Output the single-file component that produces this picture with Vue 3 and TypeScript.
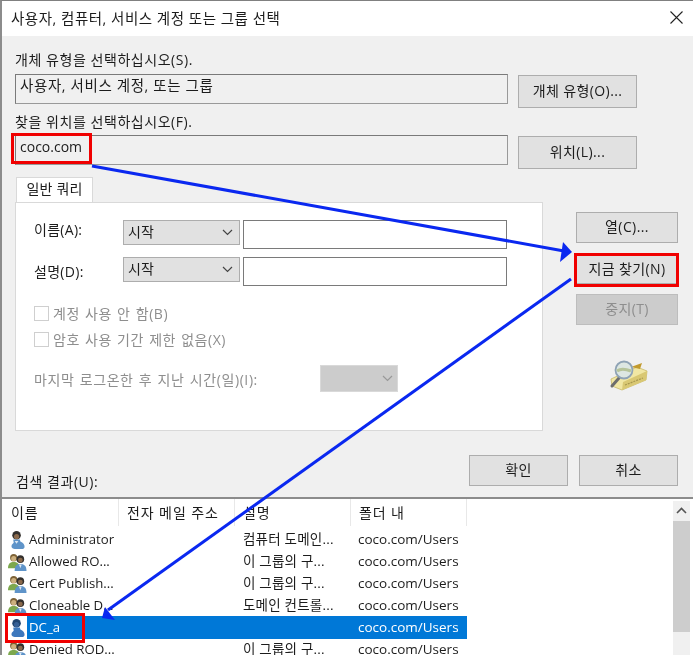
<script setup lang="ts">
interface Row { name: string; desc: string; group: boolean; selected?: boolean }
const rows: Row[] = [
  { name: 'Administrator', desc: '컴퓨터 도메인...', group: false },
  { name: 'Allowed RO...', desc: '이 그룹의 구...', group: true },
  { name: 'Cert Publish...', desc: '이 그룹의 구...', group: true },
  { name: 'Cloneable D...', desc: '도메인 컨트롤...', group: true },
  { name: 'DC_a', desc: '', group: false, selected: true },
  { name: 'Denied ROD...', desc: '이 그룹의 구...', group: true },
]
const columns = ['이름', '전자 메일 주소', '설명', '폴더 내']
const queries = [
  { label: '이름(A):' },
  { label: '설명(D):' },
]
const checks = ['계정 사용 안 함(B)', '암호 사용 기간 제한 없음(X)']
</script>

<template>
  <div class="window">
    <header class="title">
      <span>사용자, 컴퓨터, 서비스 계정 또는 그룹 선택</span>
      <svg class="close" width="13" height="13" viewBox="0 0 13 13"><path d="M.5.5l12 12M12.5.5l-12 12" stroke="#222" stroke-width="1.1" fill="none" /></svg>
    </header>

    <main class="body">
      <div class="label first">개체 유형을 선택하십시오(S).</div>
      <div class="field-row">
        <div class="field ko">사용자, 서비스 계정, 또는 그룹</div>
        <button class="btn wide">개체 유형(O)...</button>
      </div>
      <div class="label second">찾을 위치를 선택하십시오(F).</div>
      <div class="field-row">
        <div class="field">coco.com</div>
        <button class="btn wide">위치(L)...</button>
      </div>

      <div class="query">
        <div class="left">
          <div class="tab">일반 쿼리</div>
          <div class="panel">
            <div v-for="q in queries" :key="q.label" class="q-row">
              <span class="q-label">{{ q.label }}</span>
              <div class="select">
                <span>시작</span>
                <svg width="11" height="7" viewBox="0 0 11 7"><path d="M1 1l4.500 4.500L10 1" stroke="#444" stroke-width="1.200" fill="none" /></svg>
              </div>
              <div class="input"></div>
            </div>
            <label v-for="(c, i) in checks" :key="c" class="check" :class="{ top: i === 0 }">
              <span class="box"></span>{{ c }}
            </label>
            <div class="last">
              <span class="last-label">마지막 로그온한 후 지난 시간(일)(I):</span>
              <div class="select-off">
                <svg width="11" height="7" viewBox="0 0 11 7"><path d="M1 1l4.500 4.500L10 1" stroke="#999" stroke-width="1.200" fill="none" /></svg>
              </div>
            </div>
          </div>
        </div>
        <div class="side">
          <button class="btn side-btn">열(C)...</button>
          <button class="btn side-btn now">지금 찾기(N)</button>
          <button class="btn side-btn off">중지(T)</button>
          <svg class="finder" width="40" height="32" viewBox="0 0 40 32">
            <path d="M2 20L28 8l10 4-1 9-24 10-10-4z" fill="#f1e7a4" stroke="#c9b968" stroke-width=".8" />
            <path d="M13 31l24-10 1-9-24 11z" fill="#d9c873" />
            <path d="M16 26l18-7" stroke="#a8974f" stroke-width="1.200" stroke-dasharray="2 1" />
            <path d="M22 8l11-4-2 6z" fill="#c29a2e" />
            <path d="M10 19l-7 8" stroke="#6d6d6d" stroke-width="3" stroke-linecap="round" />
            <circle cx="15" cy="11" r="8.500" fill="#dde7e2" stroke="#8fa3b5" stroke-width="1.800" />
            <path d="M8 12c4-3 9-2 14 0" stroke="#b6c49a" stroke-width="3" fill="none" />
          </svg>
        </div>
      </div>

      <div class="actions">
        <span class="label results-label">검색 결과(U):</span>
        <button class="btn act">확인</button>
        <button class="btn act">취소</button>
      </div>
    </main>

    <section class="results">
      <div class="table">
        <div class="head">
          <span v-for="c in columns" :key="c" class="head-cell">{{ c }}</span>
        </div>
        <div v-for="r in rows" :key="r.name" class="row" :class="{ sel: r.selected }">
          <span class="ico">
            <svg width="20" height="20" viewBox="0 0 20 20">
              <template v-if="r.group">
                <circle cx="6" cy="5.500" r="3.800" class="hair-b" />
                <circle cx="6" cy="6.500" r="2.700" class="skin" />
                <path d="M0 16.500c0-5 2.500-6.500 6-6.500s6 1.500 6 6.500z" class="body-g" />
                <circle cx="13" cy="7" r="4" class="hair-d" />
                <circle cx="13" cy="8" r="2.500" class="skin-d" />
                <path d="M7 19.500c0-6 2.500-7.500 6-7.500s6.500 1.500 6.500 7.500z" class="body-b" />
                <path d="M11.500 12.500l1.500 4 1.500-4z" class="shirt" />
              </template>
              <template v-else>
                <circle cx="9" cy="5" r="4.500" class="hair-d" />
                <circle cx="9" cy="6.500" r="2.700" class="skin-d" />
                <path d="M5.500 9.500h7l.5 2c3 1 4.500 3 4.500 6l-1.500 2H7c-3-.5-4-2-3-4.500l2-2z" class="body-b" />
                <path d="M7 11l2 3 2-3z" class="shirt" />
              </template>
            </svg>
          </span>
          <span class="c-name">{{ r.name }}</span>
          <span class="c-mail"></span>
          <span class="c-desc">{{ r.desc }}</span>
          <span class="c-folder">coco.com/Users</span>
        </div>
      </div>
      <div class="scroll">
        <svg class="up" width="11" height="7" viewBox="0 0 11 7"><path d="M1 6l4.500-4.500L10 6" stroke="#555" stroke-width="1.600" fill="none" /></svg>
        <div class="thumb"></div>
      </div>
    </section>

    <svg class="overlay" width="693" height="655" viewBox="0 0 693 655">
      <rect x="12.500" y="134.500" width="78" height="28" fill="none" stroke="#f00000" stroke-width="3" />
      <rect x="575.500" y="254.500" width="102" height="31" fill="none" stroke="#f00000" stroke-width="3" />
      <rect x="6.500" y="614.500" width="77" height="27" fill="none" stroke="#f00000" stroke-width="3" />
      <path d="M92 166L564 251" stroke="#0a28f0" stroke-width="3" />
      <path d="M572 252L563 242 560 262z" fill="#0a28f0" />
      <path d="M571 279L108 610" stroke="#0a28f0" stroke-width="3" />
      <path d="M102 618L115 620 105 607z" fill="#0a28f0" />
    </svg>
  </div>
</template>

<style scoped>
.window {
  position: relative;
  width: 693px;
  height: 655px;
  overflow: hidden;
  box-sizing: border-box;
  border-top: 1px solid #808080;
  border-left: 2px solid #8c8c8c;
  background: #fff;
  color: #1c1c1c;
  font-family: "Open Sans", "Noto Sans CJK KR", sans-serif;
  font-size: 13.500px;
  filter: blur(.35px);
}
.title {
  height: 35px;
  display: flex;
  align-items: center;
  justify-content: space-between;
  padding: 0 10px 2px 9px;
  box-sizing: border-box;
  font-size: 14.500px;
  letter-spacing: .5px;
}
.body {
  height: 461px;
  box-sizing: border-box;
  padding: 0 15px 0 13px;
  background: #f0f0f0;
}
.label { line-height: 20px; height: 20px; font-size: 14px; letter-spacing: .55px; }
.first { padding-top: 14px; }
.second { margin-top: 4px; }
.field-row {
  display: flex;
  gap: 10px;
  margin-top: 4px;
  align-items: flex-start;
}
.second + .field-row { margin-top: 3px; }
.field {
  width: 493px;
  height: 30px;
  box-sizing: border-box;
  border: 1px solid #7a7a7a;
  border-right-color: #999;
  border-bottom-color: #999;
  padding: 0 4px;
  line-height: 21px;
  font-size: 14px;
}
.ko { font-size: 14.500px; letter-spacing: .6px; }
.btn {
  display: block;
  box-sizing: border-box;
  background: #e1e1e1;
  border: 1.500px solid #adadad;
  font: inherit;
  font-size: 14px;
  letter-spacing: .4px;
  color: inherit;
  padding: 0 0 3px;
}
.wide { width: 119px; height: 33px; margin-top: 1px; }
.query { display: flex; margin-top: 8px; }
.left { width: 528px; }
.tab {
  width: 77px;
  height: 26px;
  margin-left: 1px;
  box-sizing: border-box;
  background: #fff;
  border: 1px solid #d9d9d9;
  border-bottom: none;
  text-align: center;
  line-height: 22px;
  font-size: 14px;
  letter-spacing: .2px;
}
.panel {
  height: 229px;
  box-sizing: border-box;
  background: #fff;
  border: 1px solid #d9d9d9;
  padding: 17px 0 0 18px;
  margin-top: -1px;
  font-size: 14px;
}
.q-row {
  display: flex;
  align-items: flex-start;
  height: 29px;
  margin-bottom: 8px;
}
.q-label { width: 89px; line-height: 20px; letter-spacing: .3px; }
.q-row:nth-child(2) .q-label { padding-top: 5px; }
.select {
  width: 117px;
  height: 25px;
  box-sizing: border-box;
  background: #e1e1e1;
  border: 1px solid #adadad;
  display: flex;
  align-items: center;
  justify-content: space-between;
  padding: 0 6px 3px 4px;
  margin-right: 3px;
  font-size: 14px;
}
.select svg { margin-top: 3px; }
.input {
  width: 264px;
  height: 29px;
  box-sizing: border-box;
  border: 1px solid #7a7a7a;
  background: #fff;
}
.check {
  display: flex;
  align-items: center;
  height: 14px;
  margin-top: 12px;
  color: #8e8e8e;
  letter-spacing: .55px;
  word-spacing: 1px;
}
.check.top { margin-top: 20px; }
.box {
  width: 13px;
  height: 13px;
  border: 1px solid #cfcfcf;
  margin-right: 4px;
  flex: none;
}
.last {
  display: flex;
  align-items: center;
  margin-top: 19px;
  color: #8e8e8e;
}
.last-label { width: 286px; letter-spacing: .6px; word-spacing: 1px; }
.select-off {
  width: 78px;
  height: 27px;
  box-sizing: border-box;
  background: #cccccc;
  border: 1px solid #d9d9d9;
  display: flex;
  align-items: center;
  justify-content: flex-end;
  padding-right: 4px;
}
.side {
  margin-left: 33px;
  width: 102px;
  padding-top: 35px;
  display: flex;
  flex-direction: column;
}
.side-btn { width: 102px; height: 31px; margin-bottom: 11px; }
.now { height: 30px; margin-bottom: 10px; background: #e1e1e1; }
.off { background: #cccccc; border-color: #bdbdbd; color: #8e8e8e; }
.finder { margin: 23px 0 0 33px; }
.actions {
  display: flex;
  margin-top: 24px;
  gap: 11px;
  align-items: flex-start;
}
.results-label { margin: 17px auto 0 1px; }
.act { width: 99px; height: 31px; }
.results {
  display: flex;
  height: 158px;
  box-sizing: border-box;
  border-top: 2px solid #8c8c8c;
  background: #fff;
}
.table { width: 671px; }
.head {
  display: grid;
  grid-template-columns: 117px 116px 116px 116px;
  height: 28px;
  margin-bottom: 1px;
}
.head-cell {
  border-right: 1.500px solid #e8e8e8;
  padding: 1px 0 0 8px;
  line-height: 26px;
  height: 26px;
  font-size: 14px;
  letter-spacing: .9px;
}
.head-cell:first-child { padding-left: 9px; }
.row {
  display: grid;
  grid-template-columns: 25px 92px 116px 116px 116px;
  height: 22px;
  line-height: 23px;
  width: 465px;
  white-space: nowrap;
}
.ico { display: flex; align-items: center; padding-left: 6px; background: #fff; }
.c-name { padding-left: 2px; overflow: hidden; font-size: 13.200px; }
.c-desc { padding-left: 8px; overflow: hidden; letter-spacing: .2px; }
.c-folder { padding-left: 7px; }
.sel .c-name, .sel .c-mail, .sel .c-desc, .sel .c-folder { background: #0078d7; color: #fff; }
.hair-b { fill: #7d6236; }
.skin { fill: #cdb07e; }
.skin-d { fill: #8b6a4c; }
.body-g { fill: #7da84e; }
.hair-d { fill: #33302d; }
.body-b { fill: #5f94c9; }
.shirt { fill: #dfe8f2; }
.sel .hair-d { fill: #1f4470; }
.sel .skin-d { fill: #355f95; }
.sel .body-b { fill: #3d78bd; }
.sel .shirt { fill: #3d78bd; }
.scroll {
  width: 17px;
  height: 100%;
  background: #f0f0f0;
  display: flex;
  flex-direction: column;
  align-items: center;
  margin-top: 2px;
}
.up { margin: 6px 0 7px; }
.thumb { width: 17px; height: 111px; background: #cdcdcd; }
.overlay { position: absolute; left: -2px; top: -1px; pointer-events: none; }
</style>
